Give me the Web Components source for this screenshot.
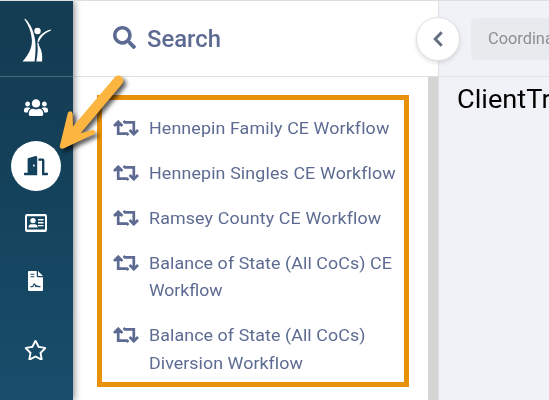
<!DOCTYPE html>
<html lang="en">
<head>
<meta charset="utf-8">
<title>ClientTrack</title>
<style>
html,body{margin:0;height:100%;overflow:hidden;background:#fff;font-family:Roboto,"Liberation Sans",sans-serif}
</style>
</head>
<body>
<app-shell></app-shell>
<script>
const define = (name, html, init) => customElements.define(name, class extends HTMLElement {
  connectedCallback() {
    if (this.shadowRoot) return;
    this.attachShadow({mode: 'open'}).innerHTML = html;
    if (init) init(this, this.shadowRoot);
  }
});

const icons = {
  users: ['0 0 640 512', '<path d="M96 224c35.3 0 64-28.7 64-64s-28.7-64-64-64-64 28.7-64 64 28.7 64 64 64zm448 0c35.3 0 64-28.7 64-64s-28.7-64-64-64-64 28.7-64 64 28.7 64 64 64zm32 32h-64c-17.6 0-33.5 7.1-45.1 18.6 40.3 22.1 68.9 62 75.1 109.4h66c17.7 0 32-14.3 32-32v-32c0-35.3-28.7-64-64-64zm-256 0c61.9 0 112-50.1 112-112S381.9 32 320 32 208 82.1 208 144s50.1 112 112 112zm76.8 32h-8.3c-20.8 10-43.9 16-68.5 16s-47.6-6-68.5-16h-8.3C179.6 288 128 339.6 128 403.2V432c0 26.5 21.5 48 48 48h288c26.5 0 48-21.5 48-48v-28.8c0-63.6-51.6-115.2-115.2-115.2zm-223.7-13.4C161.5 263.1 145.6 256 128 256H64c-35.3 0-64 28.7-64 64v32c0 17.7 14.3 32 32 32h65.9c6.3-47.4 34.9-87.3 75.2-109.4z"/>'],
  door: ['0 0 640 512', '<path d="M624 448h-80V113.45C544 86.19 522.47 64 496 64H384v64h96v384h144c8.84 0 16-7.16 16-16v-32c0-8.84-7.16-16-16-16zM312.24 1.01l-192 49.74C105.99 54.44 96 67.7 96 82.92V448H16c-8.84 0-16 7.16-16 16v32c0 8.84 7.16 16 16 16h336V33.18c0-21.58-19.56-37.41-39.76-32.17zM264 288c-13.25 0-24-14.33-24-32s10.75-32 24-32 24 14.33 24 32-10.75 32-24 32z"/>'],
  card: ['0 0 22 18', '<path fill-rule="evenodd" d="M2 0h18a2 2 0 0 1 2 2v14a2 2 0 0 1-2 2H2a2 2 0 0 1-2-2V2a2 2 0 0 1 2-2zm0 2.2v13.400h18V2.200z"/><circle cx="8" cy="6.600" r="2.700"/><path d="M3.500 13.600v-1c0-1.500 1.200-2.400 2.600-2.400h3.800c1.400 0 2.600.9 2.600 2.400v1zM13 5h5.500v1.600H13zM13 8h5.500v1.500H13zM13 11h5.500v1.300H13z"/>'],
  file: ['0 0 384 512', '<path fill-rule="evenodd" d="M24 0h200v136c0 13 11 24 24 24h136v328c0 13-11 24-24 24H24c-13 0-24-11-24-24V24C0 11 11 0 24 0zm40 72v24h96V72zm0 64v24h96v-24zM64 384v32h44c22 0 34-16 42-42l15-24 21 50c5 16 20 20 32 12l14-12 22 16h66v-32h-53c-18-24-45-25-61-11l-22-48c-6-19-33-19-39 0l-27 49c-4 9-7 10-10 10zM256 0v128h128L256 0z"/>'],
  star: ['0 0 576 512', '<path d="M528.1 171.5L382 150.2 316.7 17.8c-11.7-23.6-45.6-23.9-57.4 0L194 150.2 47.9 171.5c-26.2 3.8-36.7 36.1-17.7 54.6l105.7 103-25 145.5c-4.5 26.3 23.2 46 46.4 33.7L288 439.6l130.7 68.7c23.2 12.2 50.9-7.4 46.4-33.7l-25-145.5 105.7-103c19-18.5 8.5-50.8-17.7-54.6zM388.6 312.3l23.7 138.4L288 385.4l-124.3 65.3 23.7-138.4-100.6-98 139-20.2 62.2-126 62.2 126 139 20.2-100.6 98z"/>'],
  search: ['0 0 512 512', '<path d="M505 442.7L405.3 343c-4.5-4.5-10.6-7-17-7H372c27.6-35.3 44-79.7 44-128C416 93.1 322.9 0 208 0S0 93.1 0 208s93.1 208 208 208c48.3 0 92.7-16.4 128-44v16.3c0 6.4 2.5 12.5 7 17l99.700 99.700c9.400 9.400 24.600 9.400 33.900 0l28.300-28.300c9.400-9.400 9.400-24.600.1-34zM208 336c-70.7 0-128-57.2-128-128 0-70.7 57.2-128 128-128 70.7 0 128 57.2 128 128 0 70.7-57.2 128-128 128z"/>'],
  repeat: ['0 0 26 16', '<path fill="none" stroke="currentColor" stroke-width="2.700" d="M5.200 2v11.600H14L15.500 15M1 6l4.200-4.200L9.400 6M10.500 1L12 2.400h8.800V14M16.600 10l4.200 4.200L25 10"/>'],
  chevron: ['0 0 10 16', '<path fill="none" stroke="currentColor" stroke-width="3" d="M8.700 1.300L2.200 8l6.500 6.700"/>'],
  logo: ['0 0 30 44', '<path d="M3 .5C9 6 13 16 13.500 26c.2 7-.2 12-1 17.500H.5C8 35 10.500 28 9.800 21 9 13 6.500 7 2.500 1.500zM29 12.500c-6 2.500-9 5.500-11.500 10-1.500 3-.6 4.500 0 6 2.500 4 3 9 2.600 15h-5.800c1-5 1.500-9.500 1.400-13.500-.1-3-.7-5 .1-8 1.500-5 6-8.500 12.800-10.500z"/><path d="M15.500 24l5 3" stroke="#143e56" stroke-width="1"/><circle cx="15.500" cy="13" r="3.200"/>']
};

define('ui-icon', '<style>:host{display:block;flex:none}svg{display:block;width:100%;height:100%;fill:currentColor}</style><svg></svg>', (el, root) => {
  const [box, body] = icons[el.getAttribute('name')];
  const svg = root.querySelector('svg');
  svg.setAttribute('viewBox', box);
  svg.innerHTML = body;
});

define('nav-item', `<style>
:host{display:flex;width:50px;height:50px;border-radius:50%;align-items:center;justify-content:center;color:#fff}
:host([active]){background:#fff;color:#14425c}
</style><slot></slot>`);

define('nav-rail', `<style>
:host{display:flex;flex-direction:column;align-items:center;box-sizing:border-box;width:73px;height:399px;background:linear-gradient(#143c53,#144059 40%,#184e6c);box-shadow:1px 0 7px rgba(0,0,0,.5);padding-right:1px}
header{box-sizing:border-box;width:73px;height:76px;margin-right:-1px;padding:17px 0 0 22px;border-bottom:1px solid #46677a;color:#fff}
nav{display:flex;flex-direction:column;align-items:center;padding-top:6px}
.logo{width:30px;height:44px}.wide{width:24px;height:19.200px}.door{width:24px;height:19.200px}
.card{width:22px;height:18px}.file{width:15px;height:20px;margin-right:1px}.star{width:23px;height:20.500px;margin-right:1px}
.id{margin-top:7px}.doc{margin-top:8px}.fav{margin-top:19px}.on{margin-top:8px}
</style><header><ui-icon class="logo" name="logo"></ui-icon></header>
<nav><nav-item><ui-icon class="wide" name="users"></ui-icon></nav-item>
<nav-item class="on" active><ui-icon class="door" name="door"></ui-icon></nav-item>
<nav-item class="id"><ui-icon class="card" name="card"></ui-icon></nav-item>
<nav-item class="doc"><ui-icon class="file" name="file"></ui-icon></nav-item>
<nav-item class="fav"><ui-icon class="star" name="star"></ui-icon></nav-item></nav>`);

/* Line of text that fills the given width: slightly widened glyphs, the rest as tracking. */
define('text-line', '<style>:host{display:block;white-space:nowrap}span{display:inline-block;transform-origin:0 50%}</style><span><slot></slot></span>', (el, root) => {
  const span = root.querySelector('span');
  const target = Number(el.getAttribute('width'));
  const natural = span.getBoundingClientRect().width;
  const stretch = Math.min(1.05, Math.max(1, target / natural));
  span.style.letterSpacing = (target / stretch - natural) / el.textContent.length + 'px';
  span.style.transform = `scaleX(${stretch})`;
});

define('workflow-item', `<style>
:host{display:flex;gap:10px;color:#5d6b92;font-size:17px;line-height:27.400px}
:host([multi]){gap:9.500px}
ui-icon{width:26px;height:16px;margin-top:5px}
</style><ui-icon name="repeat"></ui-icon><div><slot></slot></div>`);

define('search-panel', `<style>
:host{display:flex;flex-direction:column;box-sizing:border-box;width:366px;height:399px;background:#fff;border-right:1px solid #dfe1e5}
header{display:flex;box-sizing:border-box;height:76px;border-bottom:1px solid #dfdfdf;padding:25px 0 0 40px;gap:11px;color:#5d6b92;font-size:23.500px;line-height:26px;font-weight:500}
header ui-icon{width:23px;height:23px}
section{display:flex;flex:1;justify-content:space-between}
.list{display:flex;flex-direction:column;gap:17.700px;padding:37.500px 0 0 40px}
.bar{width:10px;background:#d5d5d5}
</style><header><ui-icon name="search"></ui-icon><text-line width="74">Search</text-line></header>
<section><div class="list">
<workflow-item><text-line width="240">Hennepin Family CE Workflow</text-line></workflow-item>
<workflow-item><text-line width="246.500">Hennepin Singles CE Workflow</text-line></workflow-item>
<workflow-item><text-line width="232">Ramsey County CE Workflow</text-line></workflow-item>
<workflow-item multi><text-line width="243">Balance of State (All CoCs) CE</text-line><text-line width="73.500">Workflow</text-line></workflow-item>
<workflow-item multi><text-line width="216.500">Balance of State (All CoCs)</text-line><text-line width="153.500">Diversion Workflow</text-line></workflow-item>
</div><div class="bar"></div></section>`);

define('main-view', `<style>
:host{display:block;width:110px;height:399px;background:#f1f2f7;overflow:hidden}
header{box-sizing:border-box;height:76px;border-bottom:1px solid #dfe1e5;padding:17px 0 0 32px}
.field{width:180px;height:42px;border-radius:5px;background:#e8ebee;color:#8c8f92;font-size:16px;line-height:41px;padding-left:17px}
h1{margin:0;padding:5px 0 0 18px;color:#000;font-weight:400;font-size:26px;line-height:34px}
</style><header><div class="field"><text-line width="89">Coordinated</text-line></div></header><h1><text-line width="136">ClientTrack</text-line></h1>`);

define('collapse-button', `<style>
:host{display:flex;box-sizing:border-box;width:44px;height:44px;border:1px solid #dfe1e7;border-radius:50%;background:#fff;box-shadow:0 2px 4px rgba(0,0,0,.12);align-items:center;justify-content:center;color:#667080}
ui-icon{width:10px;height:16px;margin-bottom:1px}
</style><ui-icon name="chevron"></ui-icon>`);

define('callout-arrow', `<style>:host{display:block;width:90px;height:90px}svg{display:block;overflow:visible;filter:drop-shadow(3px 3px 2px rgba(0,0,0,.65))}</style>
<svg width="90" height="90" viewBox="50 70 90 90"><path fill="#fdb541" d="M114.700 77.200C119.500 72.500 126 79 122 84L80.500 133.200 91.500 130.200C95.500 129.300 96.700 133 93.500 134.600L64 148.300C61 149.700 59.200 147.700 60 145L67.700 113.600C68.500 110 72.600 110.500 72.700 114L73 126.500Z"/></svg>`);

define('app-shell', `<style>
:host{display:flex;position:relative;box-sizing:border-box;width:549px;height:400px;border-top:1px solid #dedede;overflow:hidden}
nav-rail{position:relative;z-index:1;flex:none}search-panel,main-view{flex:none}
collapse-button,.highlight,callout-arrow{position:absolute;z-index:2}
collapse-button{left:416px;top:16px}
.highlight{box-sizing:border-box;left:97px;top:94px;width:312px;height:292px;border:5px solid #e89209}
callout-arrow{left:50px;top:69px}
</style><nav-rail></nav-rail><search-panel></search-panel><main-view></main-view>
<collapse-button></collapse-button><div class="highlight"></div><callout-arrow></callout-arrow>`);
</script>
</body>
</html>
